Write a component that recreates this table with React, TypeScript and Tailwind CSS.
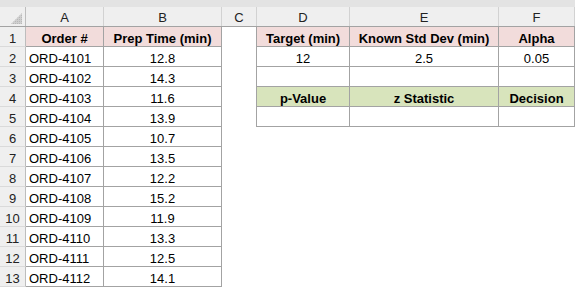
const grid = "grid grid-cols-[26px_78px_118px_35px_93px_149px_76px]";

type Cell = { t?: string; k?: "pink" | "green" | "data" | "none"; left?: boolean };

const colLetters = ["A", "B", "C", "D", "E", "F"];

const orders = [
  ["ORD-4101", "12.8"],
  ["ORD-4102", "14.3"],
  ["ORD-4103", "11.6"],
  ["ORD-4104", "13.9"],
  ["ORD-4105", "10.7"],
  ["ORD-4106", "13.5"],
  ["ORD-4107", "12.2"],
  ["ORD-4108", "15.2"],
  ["ORD-4109", "11.9"],
  ["ORD-4110", "13.3"],
  ["ORD-4111", "12.5"],
  ["ORD-4112", "14.1"],
];

// right-side block, rows 1-5
const side: Cell[][] = [
  [{ t: "Target (min)", k: "pink" }, { t: "Known Std Dev (min)", k: "pink" }, { t: "Alpha", k: "pink" }],
  [{ t: "12", k: "data" }, { t: "2.5", k: "data" }, { t: "0.05", k: "data" }],
  [{ k: "data" }, { k: "data" }, { k: "data" }],
  [{ t: "p-Value", k: "green" }, { t: "z Statistic", k: "green" }, { t: "Decision", k: "green" }],
  [{ k: "data" }, { k: "data" }, { k: "data" }],
];

function Box({ c }: { c: Cell }) {
  if (!c.k || c.k === "none") return <div />;
  const fill = c.k === "pink" ? "bg-[#f2dcdb] font-bold" : c.k === "green" ? "bg-[#d8e4bc] font-bold" : "bg-white";
  const align = c.left ? "justify-start pl-[3px]" : "justify-center";
  return (
    <div className={`flex items-end ${align} ${fill} border-r border-b border-[#a3a3a3] leading-[15px] whitespace-nowrap`}>
      {c.t}
    </div>
  );
}

export default function App() {
  const rows: Cell[][] = orders.map(([id, mins]) => [
    { t: id, k: "data", left: true },
    { t: mins, k: "data" },
  ]);
  rows.unshift([
    { t: "Order #", k: "pink" },
    { t: "Prep Time (min)", k: "pink" },
  ]);

  return (
    <div className="w-[575px] h-[288px] bg-white overflow-hidden font-['Liberation_Sans',Arial,sans-serif] text-[13px] text-black">
      <div className="h-[7px] bg-[#e3e3e3]" />
      <div className={`${grid} h-5 bg-[#efefef] border-b border-[#a3a3a3]`}>
        <div className="relative border-r border-[#bdbdbd]">
          <svg className="absolute right-[3px] bottom-[2px]" width="11" height="11" viewBox="0 0 11 11">
            <defs>
              <pattern id="hatch" width="2" height="2" patternUnits="userSpaceOnUse">
                <rect width="2" height="2" fill="#cfcfcf" />
                <rect width="1" height="1" fill="#b8b8b8" />
              </pattern>
            </defs>
            <polygon points="11,0 11,11 0,11" fill="url(#hatch)" />
          </svg>
        </div>
        {colLetters.map((l) => (
          <div key={l} className="flex items-end justify-center pb-[1px] border-r border-[#d2d2d2] text-[#222] leading-[15px]">
            {l}
          </div>
        ))}
      </div>
      {rows.map((r, i) => {
        const s = i < 5 ? side[i] : null;
        return (
          <div key={i} className={`${grid} h-5`}>
            <div className="flex items-end justify-center bg-[#efefef] border-r border-b border-r-[#bdbdbd] border-b-[#dadada] text-[#222] leading-[15px]">
              {i + 1}
            </div>
            <Box c={r[0]} />
            <Box c={r[1]} />
            <div className={s ? "border-r border-[#a3a3a3]" : ""} />
            {s ? s.map((c, j) => <Box key={j} c={c} />) : null}
          </div>
        );
      })}
    </div>
  );
}
